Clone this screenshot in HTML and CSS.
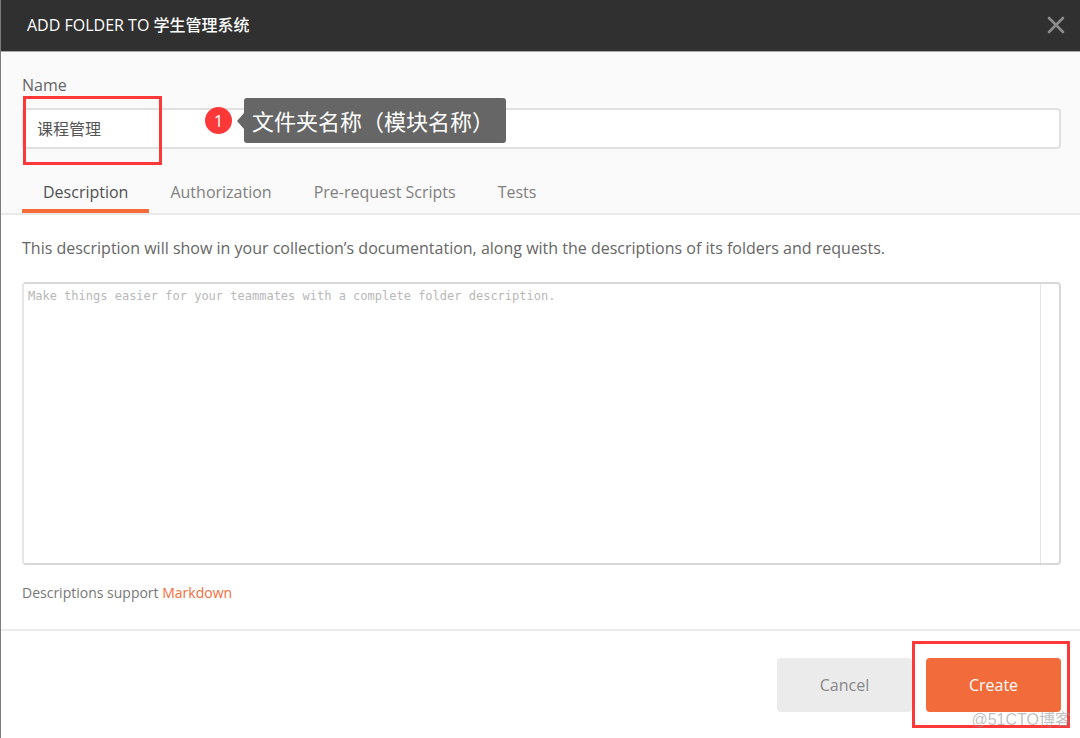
FILE: index.html
```html
<!DOCTYPE html>
<html lang="en">
<head>
<meta charset="utf-8">
<title>Add folder</title>
<meta name="viewport" content="width=device-width, initial-scale=1">
<link rel="stylesheet" href="styles.css">
</head>
<body>
<main class="dialog">
  <header class="header">
    <h1 class="title">ADD FOLDER TO 学生管理系统</h1>
    <button class="close" type="button" aria-label="Close">
      <svg width="18" height="18" viewBox="0 0 18 18" fill="none" stroke="#8c8c8c" stroke-width="2.6" stroke-linecap="round" aria-hidden="true"><path d="M2 2L16 16M16 2L2 16"/></svg>
    </button>
  </header>
  <section class="top">
    <label class="label" for="name">Name</label>
    <div class="field">
      <input class="input" id="name" type="text" value="课程管理">
      <span class="frame frame-name"></span>
      <div class="note">
        <span class="badge">1</span>
        <span class="tip">文件夹名称（模块名称）</span>
      </div>
    </div>
    <nav class="tabs" role="tablist">
      <button class="tab tab-active" type="button" role="tab" aria-selected="true">Description</button>
      <button class="tab" type="button" role="tab" aria-selected="false">Authorization</button>
      <button class="tab" type="button" role="tab" aria-selected="false">Pre-request Scripts</button>
      <button class="tab" type="button" role="tab" aria-selected="false">Tests</button>
    </nav>
  </section>
  <section class="content">
    <label class="intro" for="description">This description will show in your collection’s documentation, along with the descriptions of its folders and requests.</label>
    <div class="editor">
      <textarea class="text" id="description" placeholder="Make things easier for your teammates with a complete folder description."></textarea>
      <div class="gutter"></div>
    </div>
    <p class="hint">Descriptions support <a class="link" href="#">Markdown</a></p>
  </section>
  <footer class="footer">
    <button class="button cancel" type="button">Cancel</button>
    <div class="primary">
      <button class="button create" type="button">Create</button>
      <span class="frame frame-create"></span>
      <span class="watermark">@51CTO博客</span>
    </div>
  </footer>
</main>
</body>
</html>
```
FILE: styles.css
```css
* {
  box-sizing: border-box;
}

body {
  margin: 0;
  color: #666;
  background: #fff;
  font: 16px/24px "Open Sans", "Noto Sans CJK SC", sans-serif;
}

button,
input {
  font: inherit;
}

.dialog {
  display: flex;
  flex-direction: column;
  min-height: 100vh;
  border-left: 1px solid #7c7c7c;
}

.header {
  display: flex;
  align-items: center;
  justify-content: space-between;
  height: 52px;
  padding: 0 12px 2px 26px;
  background: #303030;
  border-bottom: 1px solid #a8a8a8;
}

.title {
  margin: 0;
  color: #fff;
  font-size: 16px;
  font-weight: 500;
}

.close {
  display: flex;
  padding: 3px;
  background: none;
  border: 0;
}

.top {
  padding: 21px 19px 0 21px;
  background: #fafafa;
  border-bottom: 2px solid #e9e9e9;
}

.label,
.intro {
  display: block;
}

.field {
  position: relative;
  margin-top: 11px;
}

.input {
  display: block;
  width: 100%;
  height: 41px;
  padding: 0 13px 2px;
  color: #555;
  background: #fff;
  border: 2px solid #e1e1e1;
  border-radius: 4px;
}

.frame {
  position: absolute;
  border: 3px solid #fc3838;
  pointer-events: none;
}

.frame-name {
  top: -12px;
  left: 1px;
  width: 139px;
  height: 69px;
}

.note {
  position: absolute;
  top: -10px;
  left: 183px;
  display: flex;
  align-items: center;
  gap: 12px;
}

.badge {
  width: 27px;
  height: 27px;
  color: #fff;
  background: #fc3838;
  border-radius: 50%;
  font-size: 17px;
  line-height: 27px;
  text-align: center;
}

.tip {
  position: relative;
  padding: 0 12px 0 8px;
  color: #fff;
  background: #666;
  border-radius: 3px;
  font-family: "Noto Sans CJK SC", sans-serif;
  font-size: 22px;
  line-height: 45px;
  white-space: nowrap;
}

.tip::before {
  position: absolute;
  top: 15px;
  left: -7px;
  border: 8px solid transparent;
  border-right: 7px solid #666;
  border-left: 0;
  content: "";
}

.tabs {
  display: flex;
  margin-top: 28px;
}

.tab {
  padding: 3px 21px 5px;
  color: #808080;
  background: none;
  border: 0;
  border-bottom: 4px solid transparent;
}

.tab-active {
  color: #505050;
  border-bottom-color: #f66c39;
}

.content {
  display: flex;
  flex: 1;
  flex-direction: column;
  padding: 21px 19px 24px 21px;
}

.editor {
  display: flex;
  flex: 1;
  margin-top: 22px;
  overflow: hidden;
  border: 2px solid #d8d8d8;
  border-left-color: #e6e6e6;
  border-radius: 4px;
}

.text {
  flex: 1;
  padding: 3px 4px;
  border: 0;
  outline: 0;
  resize: none;
  font: 12px/18px "DejaVu Sans Mono", monospace;
}

.text::placeholder {
  color: #b8b8b8;
}

.gutter {
  width: 19px;
  border-left: 1px solid #e4e4e4;
}

.hint {
  margin: 16px 0 0;
  color: #777;
  font-size: 14px;
}

.link {
  color: #f66c39;
  text-decoration: none;
}

.footer {
  display: flex;
  justify-content: flex-end;
  gap: 14px;
  padding: 27px 19px 26px;
  border-top: 2px solid #ebebeb;
}

.primary {
  position: relative;
}

.button {
  width: 135px;
  height: 54px;
  border: 0;
  border-radius: 4px;
}

.cancel {
  color: #888;
  background: #ebebeb;
}

.create {
  display: block;
  color: #fff;
  background: #f26b3a;
}

.frame-create {
  top: -17px;
  right: -9px;
  bottom: -16px;
  left: -14px;
}

.watermark {
  position: absolute;
  right: -10px;
  bottom: -20px;
  color: rgb(150 150 150 / 60%);
  font-family: "Liberation Sans", "Noto Sans CJK SC", sans-serif;
  white-space: nowrap;
}
```
